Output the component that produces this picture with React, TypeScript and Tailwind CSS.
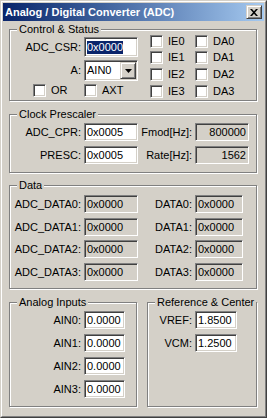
import React from "react";

const sunken =
  "border border-t-[#808080] border-l-[#808080] border-r-white border-b-white shadow-[inset_1px_1px_0_#404040,inset_-1px_-1px_0_#d4d0c8]";
const raised =
  "border border-t-[#d4d0c8] border-l-[#d4d0c8] border-r-[#404040] border-b-[#404040] shadow-[inset_1px_1px_0_#fff,inset_-1px_-1px_0_#808080]";

function Edit({
  w,
  h = 18,
  children,
  gray,
  right,
}: {
  w: string;
  h?: number;
  children: React.ReactNode;
  gray?: boolean;
  right?: boolean;
}) {
  return (
    <div
      className={`${sunken} ${w} ${h === 20 ? "h-[20px]" : "h-[18px]"} ${
        gray ? "bg-[#d4d0c8]" : "bg-white"
      } flex items-center ${right ? "justify-end pr-[2px]" : "pl-[2px]"} text-[11px] leading-[13px] text-black whitespace-nowrap`}
    >
      {children}
    </div>
  );
}

function Check({ label }: { label: string }) {
  return (
    <div className="flex items-center h-[13px]">
      <div className={`${sunken} w-[13px] h-[13px] bg-white shrink-0`} />
      <span className="ml-[5px] text-[11px] leading-[13px]">{label}</span>
    </div>
  );
}

function Group({
  title,
  className,
  children,
}: {
  title: string;
  className: string;
  children: React.ReactNode;
}) {
  return (
    <div
      className={`relative border border-[#808080] shadow-[inset_1px_1px_0_#fff,1px_1px_0_#fff] ${className}`}
    >
      <span className="absolute -top-[7px] left-[7px] px-[2px] bg-[#d4d0c8] text-[11px] leading-[13px] whitespace-nowrap">
        {title}
      </span>
      {children}
    </div>
  );
}

function Label({ w, children }: { w: string; children: React.ReactNode }) {
  return (
    <div className={`${w} shrink-0 text-right pr-[3px] text-[11px] leading-[13px] whitespace-nowrap`}>
      {children}
    </div>
  );
}

export default function App() {
  const dataRows = ["0", "1", "2", "3"];
  return (
    <div className="w-[267px] h-[418px] bg-[#d4d0c8] font-['Liberation_Sans',Arial,sans-serif] text-black">
      <div className="w-full h-full border border-t-[#d4d0c8] border-l-[#d4d0c8] border-r-[#404040] border-b-[#404040]">
        <div className="w-full h-full border border-t-white border-l-white border-r-[#808080] border-b-[#808080] p-[1px] flex flex-col">
          {/* Title bar */}
          <div className="h-[18px] shrink-0 flex items-center bg-gradient-to-r from-[#0a246a] to-[#a6caf0] pl-[2px] pr-[2px]">
            <span className="text-white font-bold text-[11px] leading-[13px] whitespace-nowrap flex-1">
              Analog / Digital Converter (ADC)
            </span>
            <div className={`${raised} bg-[#d4d0c8] w-[16px] h-[14px] flex items-center justify-center`}>
              <svg width="8" height="7" viewBox="0 0 8 7" className="block">
                <path d="M0 0 L2 0 L4 2.3 L6 0 L8 0 L5 3.5 L8 7 L6 7 L4 4.7 L2 7 L0 7 L3 3.5 Z" fill="#000" />
              </svg>
            </div>
          </div>

          <div className="pl-[6px] pr-[7px] flex flex-col">
            {/* Control & Status */}
            <Group title="Control & Status" className="mt-[8px] h-[72px] flex">
              <div className="w-[140px] shrink-0 pt-[7px] flex flex-col">
                <div className="flex items-center h-[20px]">
                  <Label w="w-[74px]">ADC_CSR:</Label>
                  <Edit w="w-[54px]" h={20}>
                    <span className="bg-[#0a246a] text-white px-0">0x0000</span>
                  </Edit>
                </div>
                <div className="flex items-center h-[21px] mt-[3px]">
                  <Label w="w-[74px]">A:</Label>
                  <div className={`${sunken} w-[54px] h-[21px] bg-white flex items-center justify-between pl-[2px] pr-[1px]`}>
                    <span className="text-[11px] leading-[13px]">AIN0</span>
                    <div className={`${raised} bg-[#d4d0c8] w-[16px] h-[17px] flex items-center justify-center`}>
                      <svg width="7" height="4" viewBox="0 0 7 4" className="block">
                        <path d="M0 0 H7 L3.5 4 Z" fill="#000" />
                      </svg>
                    </div>
                  </div>
                </div>
                <div className="flex items-center h-[13px] mt-[3px]">
                  <div className="ml-[23px] w-[51px]">
                    <Check label="OR" />
                  </div>
                  <Check label="AXT" />
                </div>
              </div>
              <div className="pt-[5px] flex">
                <div className="w-[45px] flex flex-col">
                  <Check label="IE0" />
                  <div className="mt-[3px]"><Check label="IE1" /></div>
                  <div className="mt-[4px]"><Check label="IE2" /></div>
                  <div className="mt-[4px]"><Check label="IE3" /></div>
                </div>
                <div className="flex flex-col">
                  <Check label="DA0" />
                  <div className="mt-[3px]"><Check label="DA1" /></div>
                  <div className="mt-[4px]"><Check label="DA2" /></div>
                  <div className="mt-[4px]"><Check label="DA3" /></div>
                </div>
              </div>
            </Group>

            {/* Clock Prescaler */}
            <Group title="Clock Prescaler" className="mt-[13px] h-[59px] pt-[8px] flex flex-col">
              <div className="flex items-center h-[18px]">
                <Label w="w-[74px]">ADC_CPR:</Label>
                <Edit w="w-[54px]">0x0005</Edit>
                <Label w="w-[57px]">Fmod[Hz]:</Label>
                <Edit w="w-[54px]" gray right>800000</Edit>
              </div>
              <div className="flex items-center h-[18px] mt-[5px]">
                <Label w="w-[74px]">PRESC:</Label>
                <Edit w="w-[54px]">0x0005</Edit>
                <Label w="w-[57px]">Rate[Hz]:</Label>
                <Edit w="w-[54px]" gray right>1562</Edit>
              </div>
            </Group>

            {/* Data */}
            <Group title="Data" className="mt-[12px] h-[104px] pt-[9px] flex flex-col">
              {dataRows.map((n, i) => (
                <div
                  key={n}
                  className={`flex items-center h-[18px] ${i === 0 ? "" : i === 2 ? "mt-[4px]" : "mt-[5px]"}`}
                >
                  <Label w="w-[74px]">ADC_DATA{n}:</Label>
                  <Edit w="w-[54px]" gray>0x0000</Edit>
                  <Label w="w-[57px]">DATA{n}:</Label>
                  <Edit w="w-[48px]" gray>0x0000</Edit>
                </div>
              ))}
            </Group>

            {/* Bottom groups */}
            <div className="mt-[13px] flex gap-[10px]">
              <Group title="Analog Inputs" className="w-[128px] h-[105px] pt-[8px] flex flex-col">
                {dataRows.map((n, i) => (
                  <div key={n} className={`flex items-center h-[18px] ${i === 0 ? "" : "mt-[5px]"}`}>
                    <Label w="w-[74px]">AIN{n}:</Label>
                    <Edit w="w-[41px]">0.0000</Edit>
                  </div>
                ))}
              </Group>
              <Group title="Reference & Center" className="w-[110px] h-[105px] pt-[8px] flex flex-col">
                <div className="flex items-center h-[18px]">
                  <Label w="w-[47px]">VREF:</Label>
                  <Edit w="w-[42px]">1.8500</Edit>
                </div>
                <div className="flex items-center h-[18px] mt-[5px]">
                  <Label w="w-[47px]">VCM:</Label>
                  <Edit w="w-[42px]">1.2500</Edit>
                </div>
              </Group>
            </div>
          </div>
        </div>
      </div>
    </div>
  );
}
